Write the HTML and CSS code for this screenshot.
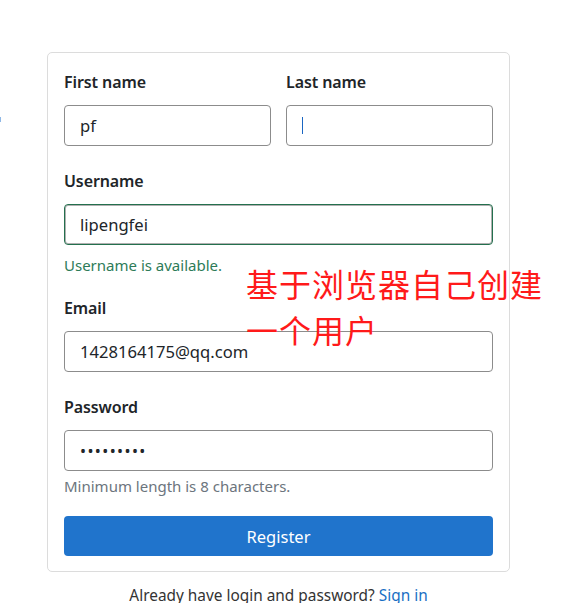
FILE: index.html
```html
<!DOCTYPE html>
<html lang="en">
<head>
<meta charset="utf-8">
<title>Register</title>
<link rel="stylesheet" href="styles.css">
</head>
<body>
<span class="edge-mark"></span>
<main class="page">
  <form class="card">
    <div class="row">
      <div class="group">
        <label class="label">First name</label>
        <div class="input">pf</div>
      </div>
      <div class="group">
        <label class="label">Last name</label>
        <div class="input"><span class="caret"></span></div>
      </div>
    </div>
    <div class="group">
      <label class="label">Username</label>
      <div class="input valid">lipengfei</div>
      <div class="feedback ok">Username is available.</div>
    </div>
    <div class="group">
      <label class="label">Email</label>
      <div class="input">1428164175@qq.com</div>
    </div>
    <div class="group">
      <label class="label">Password</label>
      <div class="input dots">•••••••••</div>
      <div class="feedback hint">Minimum length is 8 characters.</div>
    </div>
    <button type="button" class="btn">Register</button>
  </form>
  <p class="footer">Already have login and password? <a href="#" class="link">Sign in</a></p>
</main>
<div class="note">基于浏览器自己创建<br>一个用户</div>
</body>
</html>
```

FILE: styles.css
```css
html, body {
  margin: 0;
  padding: 0;
  background: #fff;
}
body {
  font-family: "Noto Sans", "Open Sans", "Liberation Sans", sans-serif;
  color: #212529;
  position: relative;
  height: 603px;
  overflow: hidden;
}
.edge-mark {
  position: absolute;
  left: 0;
  top: 117px;
  width: 1px;
  height: 5px;
  background: #8fb8e6;
}
.page {
  width: 463px;
  margin: 52px 0 0 47px;
}
.card {
  border: 1px solid #dcdcdc;
  border-radius: 5px;
  padding: 17px 16px 15px;
  display: flex;
  flex-direction: column;
}
.row {
  display: grid;
  grid-template-columns: 1fr 1fr;
  column-gap: 15px;
}
.group {
  display: flex;
  flex-direction: column;
  margin-bottom: 23px;
}
.label {
  font-size: 16px;
  font-weight: 600;
  line-height: 25px;
  margin-bottom: 10px;
  letter-spacing: -0.1px;
}
.input {
  height: 41px;
  box-sizing: border-box;
  border: 1px solid #8c8c8c;
  border-radius: 4px;
  padding: 0 15px;
  display: flex;
  align-items: center;
  font-size: 16.6px;
  color: #212529;
}
.input.valid {
  border-color: #24704e;
  box-shadow: inset 0 0 0 1px #b0b0b0;
}
.input.dots {
  font-size: 16px;
  letter-spacing: 1.4px;
}
.caret {
  width: 1px;
  height: 17px;
  background: #1a66c2;
}
.feedback {
  font-size: 15px;
  line-height: 20px;
}
.ok {
  color: #2d7b58;
  margin-top: 10px;
  margin-bottom: -2px;
}
.hint {
  color: #6c757d;
  margin-top: 5px;
  margin-bottom: -3px;
}
.btn {
  height: 40px;
  border: 0;
  border-radius: 4px;
  background: #2074cc;
  color: #fff;
  font-family: inherit;
  font-size: 16.5px;
  cursor: pointer;
}
.footer {
  margin: 12px 0 0;
  text-align: center;
  font-size: 15.4px;
  line-height: 24px;
  color: #333;
}
.link {
  color: #1a6fc4;
  text-decoration: none;
}
.note {
  position: absolute;
  left: 246px;
  top: 260px;
  font-family: "Noto Sans CJK SC", sans-serif;
  font-size: 32px;
  line-height: 46px;
  color: #ff1a1a;
  letter-spacing: 1px;
}
```
